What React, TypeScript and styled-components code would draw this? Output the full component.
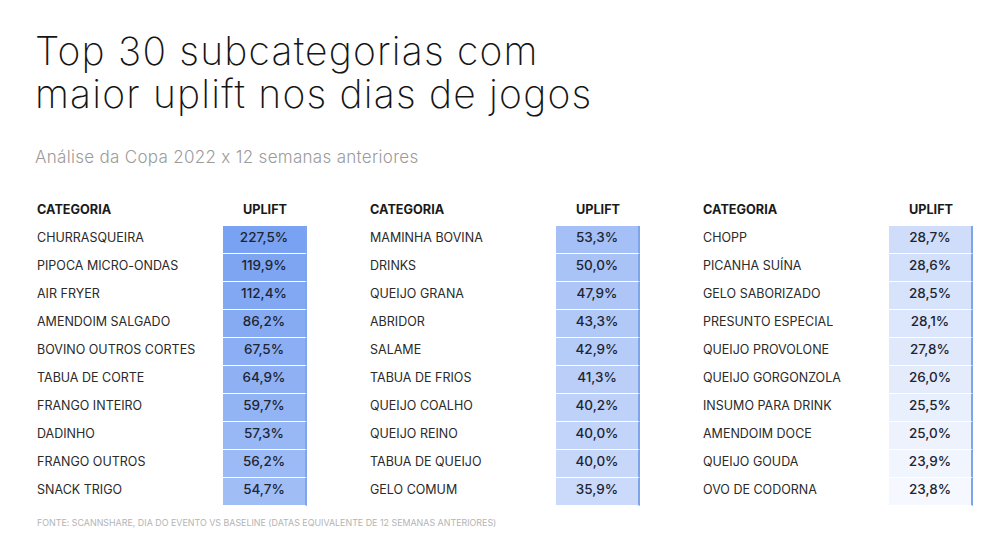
import React from "react"
import styled, { createGlobalStyle } from "styled-components"

const GlobalStyle = createGlobalStyle`
  body {
    margin: 0;
    background: #ffffff;
    font-family: "Inter", "Noto Sans", sans-serif;
    font-feature-settings: "calt" 0;
  }
`

type Row = { name: string; value: number }

const columns: Row[][] = [
  [
    { name: "CHURRASQUEIRA", value: 227.5 },
    { name: "PIPOCA MICRO-ONDAS", value: 119.9 },
    { name: "AIR FRYER", value: 112.4 },
    { name: "AMENDOIM SALGADO", value: 86.2 },
    { name: "BOVINO OUTROS CORTES", value: 67.5 },
    { name: "TABUA DE CORTE", value: 64.9 },
    { name: "FRANGO INTEIRO", value: 59.7 },
    { name: "DADINHO", value: 57.3 },
    { name: "FRANGO OUTROS", value: 56.2 },
    { name: "SNACK TRIGO", value: 54.7 },
  ],
  [
    { name: "MAMINHA BOVINA", value: 53.3 },
    { name: "DRINKS", value: 50.0 },
    { name: "QUEIJO GRANA", value: 47.9 },
    { name: "ABRIDOR", value: 43.3 },
    { name: "SALAME", value: 42.9 },
    { name: "TABUA DE FRIOS", value: 41.3 },
    { name: "QUEIJO COALHO", value: 40.2 },
    { name: "QUEIJO REINO", value: 40.0 },
    { name: "TABUA DE QUEIJO", value: 40.0 },
    { name: "GELO COMUM", value: 35.9 },
  ],
  [
    { name: "CHOPP", value: 28.7 },
    { name: "PICANHA SUÍNA", value: 28.6 },
    { name: "GELO SABORIZADO", value: 28.5 },
    { name: "PRESUNTO ESPECIAL", value: 28.1 },
    { name: "QUEIJO PROVOLONE", value: 27.8 },
    { name: "QUEIJO GORGONZOLA", value: 26.0 },
    { name: "INSUMO PARA DRINK", value: 25.5 },
    { name: "AMENDOIM DOCE", value: 25.0 },
    { name: "QUEIJO GOUDA", value: 23.9 },
    { name: "OVO DE CODORNA", value: 23.8 },
  ],
]

// rank-based scale, darkest first
const from = [122, 162, 242]
const to = [245, 248, 254]
const shade = (rank: number) => {
  const t = rank / 29
  const c = from.map((f, i) => Math.round(f + (to[i] - f) * t))
  return `rgb(${c[0]}, ${c[1]}, ${c[2]})`
}

const Page = styled.div`
  width: 1008px;
  height: 537px;
  box-sizing: border-box;
  padding: 29px 0 0 35px;
  color: #111;
  overflow: hidden;
`

const Title = styled.h1`
  margin: 0;
  font-size: 39px;
  line-height: 43px;
  font-weight: 250;
  letter-spacing: 1.2px;
  color: #151515;
`

const Subtitle = styled.div`
  margin-top: 32px;
  font-size: 17px;
  font-weight: 300;
  letter-spacing: 0.3px;
  color: #9b9b9b;
`

const Tables = styled.div`
  margin-top: 30px;
  margin-left: 2px;
  display: grid;
  grid-template-columns: repeat(3, 270px);
  column-gap: 63px;
`

const Table = styled.div`
  display: grid;
  grid-template-columns: 186px 84px;
`

const HeadCell = styled.div<{ $center?: boolean }>`
  height: 24px;
  margin-bottom: 5px;
  display: flex;
  align-items: center;
  justify-content: ${(p) => (p.$center ? "center" : "flex-start")};
  font-size: 12.7px;
  font-weight: 700;
  color: #1a1a1a;
`

const Name = styled.div`
  height: 28px;
  box-sizing: border-box;
  padding-bottom: 5px;
  display: flex;
  align-items: center;
  font-size: 12.5px;
  color: #2a2a2a;
`

const Value = styled.div`
  height: 28px;
  box-sizing: border-box;
  padding-bottom: 5px;
  display: flex;
  align-items: center;
  justify-content: center;
  border-bottom: 1px solid #ffffff;
  border-right: 2px solid #7ea5ec;
  font-size: 13.5px;
  font-weight: 500;
  color: #1d2533;
`

const Footer = styled.div`
  margin-top: 11px;
  margin-left: 2px;
  font-size: 8.9px;
  color: #b4b4b4;
`

const fmt = (v: number) => v.toFixed(1).replace(".", ",") + "%"

const App: React.FC = () => {
  return (
    <Page>
      <GlobalStyle />
      <Title>
        Top 30 subcategorias com
        <br />
        maior uplift nos dias de jogos
      </Title>
      <Subtitle>Análise da Copa 2022 x 12 semanas anteriores</Subtitle>
      <Tables>
        {columns.map((rows, ci) => (
          <Table key={ci}>
            <HeadCell>CATEGORIA</HeadCell>
            <HeadCell $center>UPLIFT</HeadCell>
            {rows.map((r, ri) => (
              <React.Fragment key={r.name}>
                <Name>{r.name}</Name>
                <Value style={{ background: shade(ci * 10 + ri) }}>
                  {fmt(r.value)}
                </Value>
              </React.Fragment>
            ))}
          </Table>
        ))}
      </Tables>
      <Footer>
        FONTE: SCANNSHARE, DIA DO EVENTO VS BASELINE (DATAS EQUIVALENTE DE 12
        SEMANAS ANTERIORES)
      </Footer>
    </Page>
  )
}

export default App
